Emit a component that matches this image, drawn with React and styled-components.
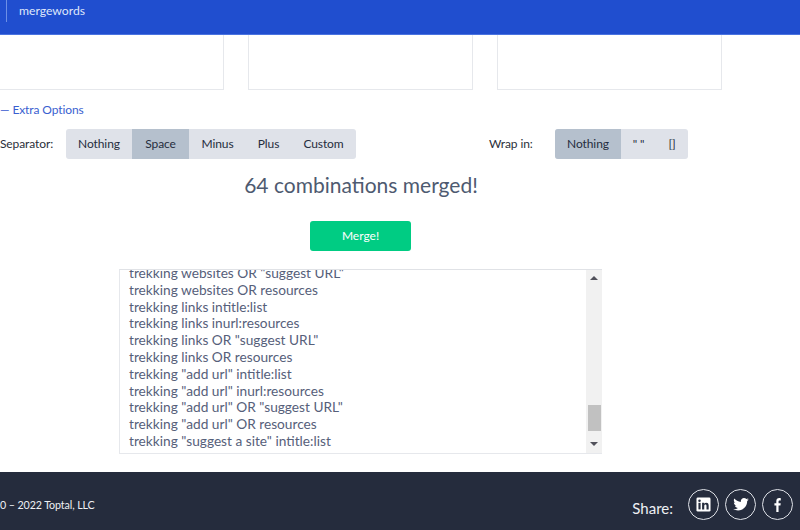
import React from "react";
import styled, { createGlobalStyle } from "styled-components";

const Global = createGlobalStyle`
  html, body { margin: 0; padding: 0; background: #fff; overflow: hidden; }
  body { font-family: "Lato", "Open Sans", sans-serif; }
`;

const Page = styled.div`
  width: 800px;
  height: 530px;
  overflow: hidden;
  display: flex;
  flex-direction: column;
`;

const Header = styled.header`
  height: 34px;
  flex: none;
  background: #204ecf;
  border-bottom: 1px solid #4a73e0;
  display: flex;
  align-items: flex-start;
  padding: 0 0 0 6px;
`;

const Crumb = styled.div`
  height: 22px;
  border-left: 1px solid #6d8fe6;
  padding-left: 12px;
  color: #dfe6fa;
  font-size: 12.2px;
  line-height: 22px;
`;

const Boxes = styled.div`
  display: flex;
  gap: 24px;
  margin-left: -1px;
  flex: none;
`;

const Box = styled.div`
  width: 225px;
  height: 55px;
  box-sizing: border-box;
  border: 1px solid #e6e8ec;
  border-top: 0;
  background: #fff;
`;

const ExtraLink = styled.a`
  display: block;
  margin-top: 12px;
  color: #3a5fd0;
  font-size: 12px;
  letter-spacing: -0.1px;
  line-height: 15px;
`;

const OptionsRow = styled.div`
  display: flex;
  margin-top: 12px;
  height: 30px;
  flex: none;
`;

const Group = styled.div`
  display: flex;
  align-items: center;
  margin-left: ${(p) => p.$offset}px;
`;

const GroupLabel = styled.span`
  font-size: 12px;
  letter-spacing: -0.1px;
  color: #2b2f3a;
  width: ${(p) => p.$width}px;
  flex: none;
  padding-bottom: 2px;
`;

const Segments = styled.div`
  display: flex;
  height: 30px;
  background: #dfe2e9;
  border-radius: 3px;
  overflow: hidden;
`;

const Segment = styled.div`
  width: ${(p) => p.$width}px;
  background: ${(p) => (p.$active ? "#b5c0cd" : "transparent")};
  color: #262d3d;
  font-size: 12px;
  letter-spacing: -0.1px;
  text-align: center;
  line-height: 29px;
`;

const Summary = styled.h2`
  margin: 11px 0 0;
  text-align: center;
  font-weight: 400;
  font-size: 21px;
  line-height: 29px;
  color: #4e5a70;
  width: 722px;
`;

const MergeButton = styled.button`
  display: block;
  margin: 22px 0 0 310px;
  width: 101px;
  height: 30px;
  flex: none;
  border: 0;
  border-radius: 3px;
  background: #00cc83;
  color: #fff;
  font: 400 12px "Lato", sans-serif;
  padding: 0 0 2px;
`;

const ResultBox = styled.div`
  margin: 18px 0 0 119px;
  width: 483px;
  height: 185px;
  flex: none;
  box-sizing: border-box;
  border: 1px solid #e6e8ec;
  border-right: 0;
  border-top-color: #e0e2e6;
  display: flex;
`;

const Lines = styled.div`
  flex: 1;
  overflow: hidden;
  padding-left: 9px;
  font-size: 13.7px;
  line-height: 16.8px;
  color: #56607a;
  white-space: nowrap;
`;

const Line = styled.div`
  position: relative;
  top: -5px;
`;

const Scrollbar = styled.div`
  width: 16px;
  flex: none;
  background: #f1f1f1;
  display: flex;
  flex-direction: column;
  align-items: center;
`;

const Arrow = styled.div`
  width: 0;
  height: 0;
  flex: none;
  border-left: 4px solid transparent;
  border-right: 4px solid transparent;
  margin: ${(p) => (p.$down ? "11px 0 7px" : "6px 0 0")};
  border-bottom: ${(p) => (p.$down ? "0" : "4px solid #50505a")};
  border-top: ${(p) => (p.$down ? "4px solid #50505a" : "0")};
`;

const Thumb = styled.div`
  width: 13px;
  height: 26px;
  flex: none;
  margin-top: auto;
  background: #c1c1c1;
`;

const Footer = styled.footer`
  margin-top: auto;
  height: 58px;
  box-sizing: border-box;
  padding-top: 7px;
  flex: none;
  background: #252c3d;
  display: flex;
  align-items: center;
  color: #eef0f4;
`;

const Copyright = styled.div`
  font-size: 10.7px;
  letter-spacing: -0.1px;
  padding-bottom: 1px;
`;

const Share = styled.div`
  margin-left: auto;
  margin-right: 7px;
  display: flex;
  align-items: center;
  gap: 6px;
  font-size: 15px;
`;

const ShareLabel = styled.span`
  margin-right: 9px;
  padding-top: 6px;
`;

const Social = styled.a`
  width: 31px;
  height: 31px;
  box-sizing: border-box;
  border: 1px solid #dfe2e8;
  border-radius: 50%;
  display: flex;
  align-items: center;
  justify-content: center;
  color: #fff;
`;

const lines = [
  'trekking websites OR "suggest URL"',
  "trekking websites OR resources",
  "trekking links intitle:list",
  "trekking links inurl:resources",
  'trekking links OR "suggest URL"',
  "trekking links OR resources",
  'trekking "add url" intitle:list',
  'trekking "add url" inurl:resources',
  'trekking "add url" OR "suggest URL"',
  'trekking "add url" OR resources',
  'trekking "suggest a site" intitle:list',
];

export default function App() {
  return (
    <Page>
      <Global />
      <Header>
        <Crumb>mergewords</Crumb>
      </Header>
      <Boxes>
        <Box />
        <Box />
        <Box />
      </Boxes>
      <ExtraLink>— Extra Options</ExtraLink>
      <OptionsRow>
        <Group $offset={0}>
          <GroupLabel $width={66}>Separator:</GroupLabel>
          <Segments>
            <Segment $width={66}>Nothing</Segment>
            <Segment $width={57} $active>Space</Segment>
            <Segment $width={57}>Minus</Segment>
            <Segment $width={45}>Plus</Segment>
            <Segment $width={65}>Custom</Segment>
          </Segments>
        </Group>
        <Group $offset={133}>
          <GroupLabel $width={66}>Wrap in:</GroupLabel>
          <Segments>
            <Segment $width={66} $active>Nothing</Segment>
            <Segment $width={35}>" "</Segment>
            <Segment $width={32}>[]</Segment>
          </Segments>
        </Group>
      </OptionsRow>
      <Summary>64 combinations merged!</Summary>
      <MergeButton>Merge!</MergeButton>
      <ResultBox>
        <Lines>
          {lines.map((l) => (
            <Line key={l}>{l}</Line>
          ))}
        </Lines>
        <Scrollbar>
          <Arrow />
          <Thumb />
          <Arrow $down />
        </Scrollbar>
      </ResultBox>
      <Footer>
        <Copyright>0 – 2022 Toptal, LLC</Copyright>
        <Share>
          <ShareLabel>Share:</ShareLabel>
          <Social>
            <svg width="15" height="15" viewBox="0 0 16 16">
              <rect x="0.5" y="0.5" width="15" height="15" rx="1.5" fill="#fff" />
              <rect x="2.6" y="6.2" width="2.3" height="7" fill="#252c3d" />
              <circle cx="3.75" cy="3.9" r="1.35" fill="#252c3d" />
              <path d="M6.5 6.2h2.2v1c.5-.8 1.3-1.2 2.3-1.2 1.9 0 2.5 1.2 2.5 3.1v4.1h-2.3V9.6c0-.9-.2-1.6-1.1-1.6-1 0-1.3.7-1.3 1.6v3.6H6.5z" fill="#252c3d" />
            </svg>
          </Social>
          <Social>
            <svg width="16" height="13" viewBox="0 0 24 20">
              <path fill="#fff" d="M24 2.4c-.9.4-1.8.7-2.8.8 1-.6 1.800-1.600 2.200-2.700-1 .6-2 1-3.100 1.200C19.300.7 18 0 16.600 0c-2.700 0-4.900 2.200-4.900 4.900 0 .4 0 .8.100 1.100C7.700 5.800 4.100 3.900 1.700.9c-.4.700-.7 1.600-.7 2.500 0 1.700.9 3.200 2.200 4.100-.8 0-1.600-.2-2.200-.6v.1c0 2.400 1.700 4.400 3.900 4.800-.4.100-.8.200-1.300.2-.3 0-.6 0-.9-.1.600 2 2.400 3.400 4.600 3.400-1.700 1.300-3.800 2.100-6.100 2.100-.4 0-.8 0-1.200-.1C2.200 18.300 4.800 19.100 7.500 19.100c9.100 0 14-7.500 14-14v-.6c1-.7 1.800-1.500 2.500-2.100z" />
            </svg>
          </Social>
          <Social>
            <svg width="7" height="14" viewBox="0 0 10 18" preserveAspectRatio="none">
              <path fill="#fff" d="M6.500 18V9.800h2.700l.4-3.200H6.500v-2c0-.9.300-1.500 1.600-1.500h1.600V.2C9.400.1 8.500 0 7.400 0 5 0 3.300 1.500 3.300 4.200v2.400H.6v3.200h2.700V18z" />
            </svg>
          </Social>
        </Share>
      </Footer>
    </Page>
  );
}
